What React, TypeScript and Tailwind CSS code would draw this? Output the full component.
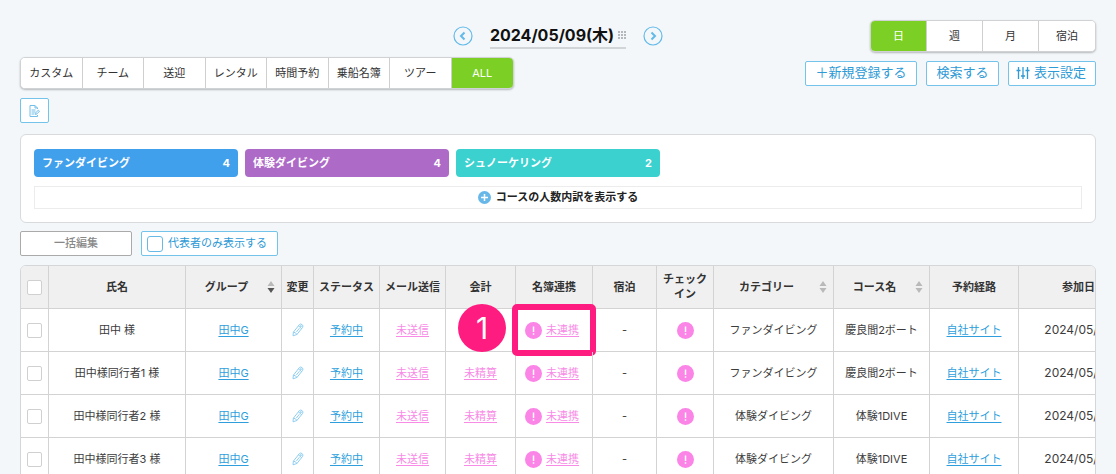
import React from "react";

interface Segment {
  label: string;
  active?: boolean;
}

interface Booking {
  name: string;
  payment?: string;
  category: string;
  course: string;
}

interface Column {
  label: string;
  width: string;
  sort?: "none" | "desc";
}

const filterTabs: Segment[] = [
  { label: "カスタム" },
  { label: "チーム" },
  { label: "送迎" },
  { label: "レンタル" },
  { label: "時間予約" },
  { label: "乗船名簿" },
  { label: "ツアー" },
  { label: "ALL", active: true },
];

const rangeTabs: Segment[] = [
  { label: "日", active: true },
  { label: "週" },
  { label: "月" },
  { label: "宿泊" },
];

const courses = [
  { label: "ファンダイビング", count: 4, color: "bg-[#41a0ec]" },
  { label: "体験ダイビング", count: 4, color: "bg-[#ae6ac7]" },
  { label: "シュノーケリング", count: 2, color: "bg-[#3ad1cf]" },
];

const columns: Column[] = [
  { label: "氏名", width: "w-[137px]" },
  { label: "グループ", width: "w-[96px]", sort: "desc" },
  { label: "変更", width: "w-[32px]" },
  { label: "ステータス", width: "w-[66px]" },
  { label: "メール送信", width: "w-[66px]" },
  { label: "会計", width: "w-[70px]" },
  { label: "名簿連携", width: "w-[77px]" },
  { label: "宿泊", width: "w-[64px]" },
  { label: "チェック\nイン", width: "w-[57px]" },
  { label: "カテゴリー", width: "w-[120px]", sort: "none" },
  { label: "コース名", width: "w-[96px]", sort: "none" },
  { label: "予約経路", width: "w-[89px]" },
  { label: "参加日", width: "w-[120px]" },
];

const bookings: Booking[] = [
  { name: "田中 様", category: "ファンダイビング", course: "慶良間2ボート" },
  { name: "田中様同行者1 様", payment: "未精算", category: "ファンダイビング", course: "慶良間2ボート" },
  { name: "田中様同行者2 様", payment: "未精算", category: "体験ダイビング", course: "体験1DIVE" },
  { name: "田中様同行者3 様", payment: "未精算", category: "体験ダイビング", course: "体験1DIVE" },
];

const outlineButton =
  "flex h-[25px] items-center rounded-[2px] border border-[#74c3ea] bg-white text-[#2e9ad6]";
const blueLink = "text-[#2e9fdc] underline underline-offset-2";
const pinkLink = "text-[#f78be6] underline underline-offset-2";
const cell = "h-[43px] border-r border-b border-[#d3d3d3] p-0";

const Segments: React.FC<{ items: Segment[]; className: string }> = ({ items, className }) => (
  <div
    className={`grid h-8 auto-cols-fr grid-flow-col overflow-hidden rounded-[5px] border border-[#d0d2d3] bg-white shadow-[0_1px_2px_rgba(0,0,0,0.25)] ${className}`}
  >
    {items.map((item) => (
      <button
        key={item.label}
        type="button"
        className={`border-r border-[#cfcfcf] text-[11px] last:border-r-0 ${
          item.active ? "bg-[#7cd025] text-white" : "bg-white text-[#333]"
        }`}
      >
        {item.label}
      </button>
    ))}
  </div>
);

const Chevron: React.FC<{ direction: "left" | "right"; label: string }> = ({ direction, label }) => (
  <button type="button" aria-label={label} className="text-[#62bae8]">
    <svg width="20" height="20" viewBox="0 0 20 20" fill="none" stroke="currentColor">
      <circle cx="10" cy="10" r="9" strokeWidth="1.2" />
      <path d={direction === "left" ? "M11.5 6.5 8 10l3.5 3.5" : "M8.5 6.5 12 10l-3.5 3.5"} strokeWidth="2" />
    </svg>
  </button>
);

const Sorter: React.FC<{ sort: "none" | "desc" }> = ({ sort }) => (
  <svg width="8" height="12" viewBox="0 0 8 12">
    <path d="M4 0 7.5 5h-7z" fill="#b9b9b9" />
    <path d="M4 12 .5 7h7z" fill={sort === "desc" ? "#555" : "#b9b9b9"} />
  </svg>
);

const Pencil = () => (
  <svg width="12" height="14" viewBox="0 0 12 14" fill="none" stroke="#83c8ee" strokeWidth="0.9">
    <path d="M1 12.8 1.4 9.2 7.3 1.7Q8.6.4 10.1 1.6 11.6 2.9 10.6 4.4L4.9 11.5z" strokeLinejoin="round" />
    <path d="m6.4 2.9 3.2 2.7M1.4 9.2q2.4 0 3.5 2.3M7.4 5.2 4.4 9" />
    <circle cx="8.8" cy="3.2" r=".6" />
  </svg>
);

const Alert = () => (
  <svg width="17" height="17" viewBox="0 0 17 17" className="shrink-0">
    <circle cx="8.5" cy="8.5" r="8.5" fill="#fb84e7" />
    <path d="M8.5 4.5v5.5M8.5 11.2v1.6" stroke="#fff" strokeWidth="1.5" />
  </svg>
);

const Check: React.FC<{ label: string }> = ({ label }) => (
  <input
    type="checkbox"
    aria-label={label}
    className="mx-auto block size-[15px] appearance-none rounded-[2px] border border-[#d0d0d0] bg-white"
  />
);

const Callout = () => (
  <div className="pointer-events-none absolute -top-[5px] -left-[4px] h-[52px] w-[84px] rounded-[5px] border-[6px] border-[#ff1c80]">
    <span className="absolute -top-[6px] -left-[60px] flex size-12 items-center justify-center rounded-full bg-[#ff1c80] text-[30px] leading-none text-white">
      1
    </span>
  </div>
);

const BookingTable = () => (
  <div className="mt-[9px] overflow-hidden rounded-t-[6px] border border-[#d3d7da] bg-white">
    <table className="w-[1117px] table-fixed border-separate border-spacing-0 text-center text-[11px] leading-[15px] text-[#3c3c3c]">
      <thead>
        <tr className="bg-[#f0f0f0]">
          <th className={`${cell} w-[28px]`}>
            <Check label="すべて選択" />
          </th>
          {columns.map((column) => (
            <th
              key={column.label}
              className={`${cell} ${column.width} font-bold whitespace-pre-line text-[#333]`}
            >
              {column.sort ? (
                <div className="flex items-center pr-[6px]">
                  <span className="flex-1">{column.label}</span>
                  <Sorter sort={column.sort} />
                </div>
              ) : (
                column.label
              )}
            </th>
          ))}
        </tr>
      </thead>
      <tbody>
        {bookings.map((booking, index) => (
          <tr key={booking.name}>
            <td className={cell}>
              <Check label={booking.name} />
            </td>
            <td className={cell}>{booking.name}</td>
            <td className={cell}>
              <a href="#group" className={blueLink}>田中G</a>
            </td>
            <td className={cell}>
              <button type="button" aria-label="変更" className="mx-auto block">
                <Pencil />
              </button>
            </td>
            <td className={cell}>
              <a href="#status" className={blueLink}>予約中</a>
            </td>
            <td className={cell}>
              <a href="#mail" className={pinkLink}>未送信</a>
            </td>
            <td className={cell}>
              {booking.payment && <a href="#payment" className={pinkLink}>{booking.payment}</a>}
            </td>
            <td className={`${cell} relative`}>
              <div className="flex items-center justify-center gap-1 pr-1">
                <Alert />
                <a href="#roster" className={pinkLink}>未連携</a>
              </div>
              {index === 0 && <Callout />}
            </td>
            <td className={cell}>-</td>
            <td className={cell}>
              <div className="flex justify-center">
                <Alert />
              </div>
            </td>
            <td className={cell}>{booking.category}</td>
            <td className={cell}>{booking.course}</td>
            <td className={cell}>
              <a href="#site" className={blueLink}>自社サイト</a>
            </td>
            <td className={`${cell} text-xs`}>2024/05/09</td>
          </tr>
        ))}
      </tbody>
    </table>
  </div>
);

const App: React.FC = () => {
  return (
    <main className="h-screen overflow-hidden bg-[#f3f7fa] px-5 pt-5 font-['Inter','Noto_Sans_CJK_JP',sans-serif] text-[#333]">
      <header className="grid grid-cols-[1fr_auto_1fr] items-center">
        <div />
        <div className="flex items-center gap-[17px]">
          <Chevron direction="left" label="前の日" />
          <button
            type="button"
            className="flex h-[26px] items-center gap-1 border-b-2 border-[#d2d5d7] text-base leading-6 font-bold text-[#111]"
          >
            2024/05/09(木)
            <svg width="8" height="8" viewBox="0 0 8 8" fill="#b5b8ba">
              <path d="M0 0h2v2H0zM3 0h2v2H3zM6 0h2v2H6zM0 3h2v2H0zM3 3h2v2H3zM6 3h2v2H6zM0 6h2v2H0zM3 6h2v2H3zM6 6h2v2H6z" />
            </svg>
          </button>
          <Chevron direction="right" label="次の日" />
        </div>
        <Segments items={rangeTabs} className="w-[226px] justify-self-end" />
      </header>

      <div className="mt-[5px] flex items-center justify-between">
        <Segments items={filterTabs} className="w-[494px]" />
        <div className="flex gap-[9px] text-[13px]">
          <button type="button" className={`${outlineButton} w-[112px] justify-center`}>＋新規登録する</button>
          <button type="button" className={`${outlineButton} w-[73px] justify-center`}>検索する</button>
          <button type="button" className={`${outlineButton} w-[88px] gap-1 pl-[7px]`}>
            <svg width="14" height="14" viewBox="0 0 14 14" fill="none" stroke="currentColor" strokeWidth="1.3">
              <path d="M2.5 1v12M7 1v12M11.5 1v12M.5 4.5h4M5 10h4M9.5 4.5h4" />
            </svg>
            表示設定
          </button>
        </div>
      </div>

      <button type="button" aria-label="メモ" className={`${outlineButton} mt-[9px] w-[29px] justify-center`}>
        <svg width="11" height="12" viewBox="0 0 11 12" fill="none" stroke="#74bfe9">
          <path d="M8.5 4V3L6 .5H1v11h7.5V10M6 .5V3h2.5M2.5 5h4M2.5 7h4M2.5 9h3" />
          <path d="m6.5 9.5.4-1.8 2.4-2.6 1.2 1-2.4 2.7z" />
        </svg>
      </button>

      <section className="mt-[11px] rounded-[6px] border border-[#d8dbdd] bg-white px-[13px] pt-[14px] pb-[13px] text-[11px] font-bold">
        <div className="flex gap-[7px]">
          {courses.map((course) => (
            <div
              key={course.label}
              className={`flex h-7 w-[204px] items-center justify-between rounded-[4px] px-2 text-white ${course.color}`}
            >
              <span>{course.label}</span>
              <span>{course.count}</span>
            </div>
          ))}
        </div>
        <button
          type="button"
          className="mt-[9px] flex h-[23px] w-full items-center justify-center gap-[5px] border border-[#ececec] text-[#222]"
        >
          <svg width="13" height="13" viewBox="0 0 13 13">
            <circle cx="6.5" cy="6.5" r="6.5" fill="#68b7e9" />
            <path d="M6.5 3v7M3 6.5h7" stroke="#fff" strokeWidth="1.5" />
          </svg>
          コースの人数内訳を表示する
        </button>
      </section>

      <div className="mt-2 flex gap-[9px] text-[11px]">
        <button
          type="button"
          className="h-[25px] w-[112px] rounded-[2px] border border-[#aaa] bg-white font-medium text-[#888]"
        >
          一括編集
        </button>
        <label className={`${outlineButton} w-[137px] gap-[5px] pl-[5px]`}>
          <input
            type="checkbox"
            className="size-4 appearance-none rounded-[3px] border border-[#68b9e5] bg-white"
          />
          代表者のみ表示する
        </label>
      </div>

      <BookingTable />
    </main>
  );
};

export default App;
